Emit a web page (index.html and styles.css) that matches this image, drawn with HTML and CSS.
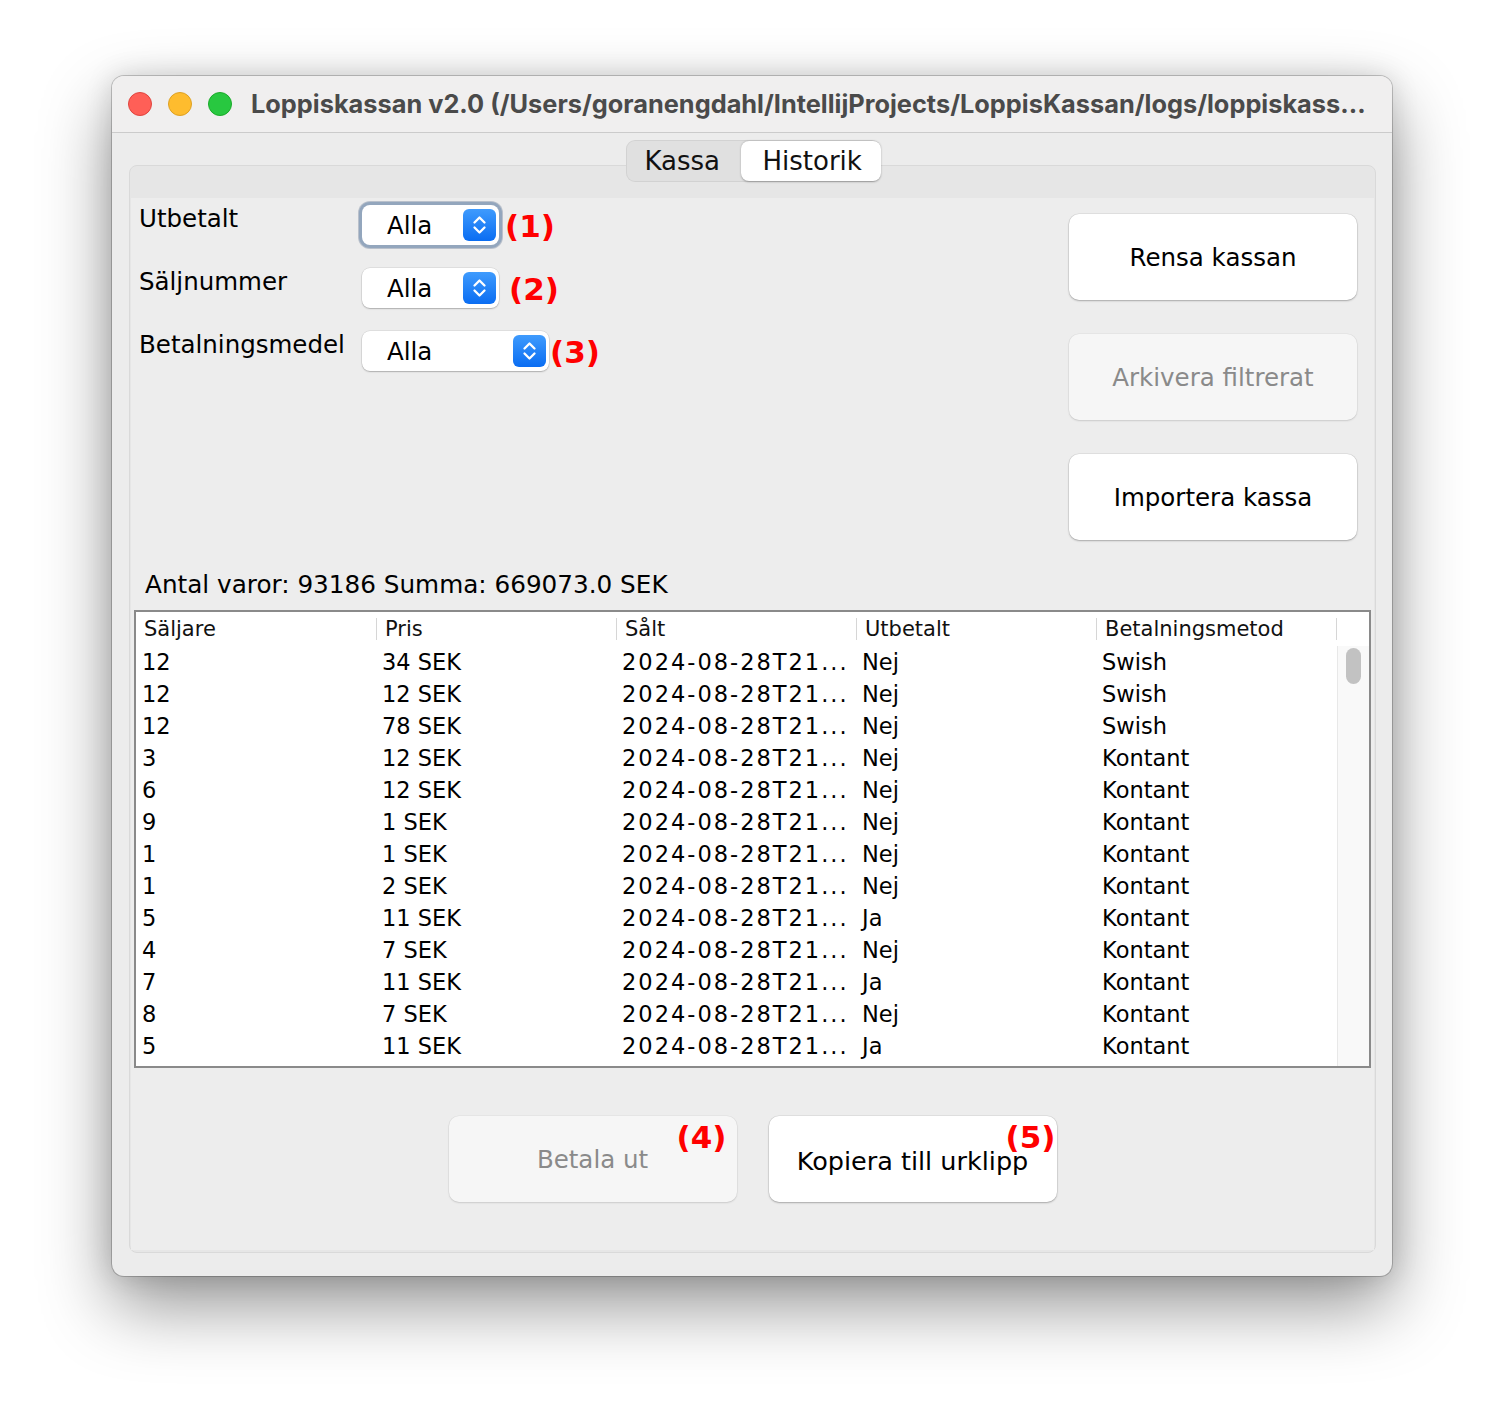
FILE: index.html
```html
<!DOCTYPE html>
<html lang="sv">
<head>
<meta charset="utf-8">
<title>Loppiskassan v2.0</title>
<link rel="stylesheet" href="styles.css">
</head>
<body>
<div class="window">
  <div class="titlebar">
    <span class="light red"></span>
    <span class="light yellow"></span>
    <span class="light green"></span>
    <div class="title">Loppiskassan v2.0 (/Users/goranengdahl/IntellijProjects/LoppisKassan/logs/loppiskass...</div>
  </div>
  <div class="content">
    <div class="tabs">
      <div class="tab">Kassa</div>
      <div class="tab active">Historik</div>
    </div>
    <div class="panel">
      <div class="pane">
        <div class="top">
          <div class="filters">
            <div class="frow">
              <div class="flabel">Utbetalt</div>
              <div class="combo focus"><span class="cval">Alla</span><span class="arrow"><svg width="33" height="32" viewBox="0 0 33 32"><path d="M11.5 13.5 L16.5 8.5 L21.5 13.5 M11.5 18.5 L16.5 23.5 L21.5 18.5" fill="none" stroke="#fff" stroke-width="2.3" stroke-linecap="round" stroke-linejoin="round"/></svg></span></div>
              <span class="mark m1">(1)</span>
            </div>
            <div class="frow">
              <div class="flabel">Säljnummer</div>
              <div class="combo"><span class="cval">Alla</span><span class="arrow"><svg width="33" height="32" viewBox="0 0 33 32"><path d="M11.5 13.5 L16.5 8.5 L21.5 13.5 M11.5 18.5 L16.5 23.5 L21.5 18.5" fill="none" stroke="#fff" stroke-width="2.3" stroke-linecap="round" stroke-linejoin="round"/></svg></span></div>
              <span class="mark m2">(2)</span>
            </div>
            <div class="frow">
              <div class="flabel">Betalningsmedel</div>
              <div class="combo wide"><span class="cval">Alla</span><span class="arrow"><svg width="33" height="32" viewBox="0 0 33 32"><path d="M11.5 13.5 L16.5 8.5 L21.5 13.5 M11.5 18.5 L16.5 23.5 L21.5 18.5" fill="none" stroke="#fff" stroke-width="2.3" stroke-linecap="round" stroke-linejoin="round"/></svg></span></div>
              <span class="mark m3">(3)</span>
            </div>
          </div>
          <div class="actions">
            <div class="btn">Rensa kassan</div>
            <div class="btn disabled">Arkivera filtrerat</div>
            <div class="btn">Importera kassa</div>
          </div>
        </div>
        <div class="summary">Antal varor: 93186 Summa: 669073.0 SEK</div>
        <div class="table">
          <div class="thead">
            <div class="th">Säljare</div>
            <div class="th">Pris</div>
            <div class="th">Sålt</div>
            <div class="th">Utbetalt</div>
            <div class="th">Betalningsmetod</div>
          </div>
          <div class="tbody">
            <div class="rows">
              <div class="tr"><div class="td">12</div><div class="td">34 SEK</div><div class="td date">2024-08-28T21...</div><div class="td">Nej</div><div class="td">Swish</div></div>
              <div class="tr"><div class="td">12</div><div class="td">12 SEK</div><div class="td date">2024-08-28T21...</div><div class="td">Nej</div><div class="td">Swish</div></div>
              <div class="tr"><div class="td">12</div><div class="td">78 SEK</div><div class="td date">2024-08-28T21...</div><div class="td">Nej</div><div class="td">Swish</div></div>
              <div class="tr"><div class="td">3</div><div class="td">12 SEK</div><div class="td date">2024-08-28T21...</div><div class="td">Nej</div><div class="td">Kontant</div></div>
              <div class="tr"><div class="td">6</div><div class="td">12 SEK</div><div class="td date">2024-08-28T21...</div><div class="td">Nej</div><div class="td">Kontant</div></div>
              <div class="tr"><div class="td">9</div><div class="td">1 SEK</div><div class="td date">2024-08-28T21...</div><div class="td">Nej</div><div class="td">Kontant</div></div>
              <div class="tr"><div class="td">1</div><div class="td">1 SEK</div><div class="td date">2024-08-28T21...</div><div class="td">Nej</div><div class="td">Kontant</div></div>
              <div class="tr"><div class="td">1</div><div class="td">2 SEK</div><div class="td date">2024-08-28T21...</div><div class="td">Nej</div><div class="td">Kontant</div></div>
              <div class="tr"><div class="td">5</div><div class="td">11 SEK</div><div class="td date">2024-08-28T21...</div><div class="td">Ja</div><div class="td">Kontant</div></div>
              <div class="tr"><div class="td">4</div><div class="td">7 SEK</div><div class="td date">2024-08-28T21...</div><div class="td">Nej</div><div class="td">Kontant</div></div>
              <div class="tr"><div class="td">7</div><div class="td">11 SEK</div><div class="td date">2024-08-28T21...</div><div class="td">Ja</div><div class="td">Kontant</div></div>
              <div class="tr"><div class="td">8</div><div class="td">7 SEK</div><div class="td date">2024-08-28T21...</div><div class="td">Nej</div><div class="td">Kontant</div></div>
              <div class="tr"><div class="td">5</div><div class="td">11 SEK</div><div class="td date">2024-08-28T21...</div><div class="td">Ja</div><div class="td">Kontant</div></div>
            </div>
            <div class="scrollbar"><div class="thumb"></div></div>
          </div>
        </div>
        <div class="bottom">
          <div class="btn disabled">Betala ut<span class="mark overlay m4">(4)</span></div>
          <div class="btn copy">Kopiera till urklipp<span class="mark overlay m5">(5)</span></div>
        </div>
      </div>
    </div>
  </div>
</div>
</body>
</html>
```

FILE: styles.css
```css
* { box-sizing: border-box; }

html { background: #ffffff; }

body {
  margin: 0;
  padding: 76px 0 148px 112px;
  background: #ffffff;
  font-family: "DejaVu Sans", "Liberation Sans", sans-serif;
  color: #000;
}

.window {
  width: 1280px;
  height: 1200px;
  border-radius: 12px;
  background: #ececec;
  overflow: hidden;
  display: flex;
  flex-direction: column;
  box-shadow: 0 0 0 1px rgba(0,0,0,0.2), 0 30px 70px rgba(0,0,0,0.42), 0 0 28px rgba(0,0,0,0.14);
}

.titlebar {
  height: 57px;
  flex: none;
  background: #f0efef;
  border-bottom: 1px solid #cbcbcb;
  display: flex;
  align-items: center;
  padding-left: 16px;
}

.light {
  width: 24px;
  height: 24px;
  border-radius: 50%;
  margin-right: 16px;
  flex: none;
}
.light.red { background: #ff5f57; border: 1px solid #e0443e; }
.light.yellow { background: #febc2e; border: 1px solid #dea123; }
.light.green { background: #28c840; border: 1px solid #1aab29; margin-right: 19px; }

.title {
  font-family: "Inter", "Liberation Sans", sans-serif;
  font-weight: 700;
  font-size: 25.35px;
  color: #4a4a4a;
  white-space: nowrap;
  overflow: hidden;
  margin-top: -1px;
}

.content {
  flex: 1;
  display: flex;
  flex-direction: column;
  padding: 7px 16px 23px 17px;
}

.tabs {
  align-self: center;
  position: relative;
  z-index: 1;
  display: flex;
  height: 42px;
  background: #e0e0e0;
  border-radius: 9px;
  box-shadow: inset 0 0 0 1px rgba(0,0,0,0.06);
  margin-left: 1px;
}

.tab {
  font-size: 26px;
  line-height: 42px;
  color: #111;
  padding: 0 24px 0 19px;
}
.tab:first-child { width: 115px; }
.tab.active {
  width: 140px;
  background: #fff;
  border-radius: 8px;
  margin: 1px 0;
  line-height: 40px;
  padding-left: 22px;
  box-shadow: 0 0.5px 2px rgba(0,0,0,0.3);
}

.panel {
  flex: 1;
  margin-top: -17px;
  border: 1px solid #d9d9d9;
  border-radius: 8px;
  background: #e6e6e6;
  padding: 32px 1px 2px 1px;
  display: flex;
  flex-direction: column;
}

.pane {
  flex: 1;
  background: #ededed;
  display: flex;
  flex-direction: column;
}

.top {
  height: 344px;
  display: flex;
  justify-content: space-between;
}

.filters {
  padding: 7px 0 0 8px;
  display: flex;
  flex-direction: column;
  gap: 22px;
}

.frow {
  display: flex;
  align-items: flex-start;
  height: 41px;
}

.flabel {
  width: 223px;
  font-size: 24.5px;
  line-height: 28px;
  margin-top: 0;
}

.combo {
  width: 137px;
  height: 40px;
  background: #fff;
  border-radius: 8px;
  box-shadow: 0 0 0 0.5px rgba(0,0,0,0.12), 0 1px 1.5px rgba(0,0,0,0.22);
  display: flex;
  align-items: center;
  justify-content: space-between;
  padding: 0 3px 0 25px;
  font-size: 24.5px;
}
.combo.wide { width: 187px; }
.combo.focus {
  box-shadow: 0 0 0 3px #93a6bd, 0 0 0 4px rgba(90,110,140,0.35);
}

.cval { line-height: 40px; margin-top: 1px; }

.arrow {
  width: 33px;
  height: 32px;
  border-radius: 6px;
  background: linear-gradient(#3f9bfd, #0a6df2);
  display: flex;
}

.mark {
  font-weight: 700;
  font-size: 31px;
  line-height: 34px;
  color: #ff0000;
  align-self: center;
}
.m1 { margin-left: 6px; }
.m2 { margin-left: 10px; }
.m3 { margin-left: 1px; }

.actions {
  padding: 16px 17px 0 0;
  display: flex;
  flex-direction: column;
  gap: 34px;
}

.btn {
  width: 288px;
  height: 86px;
  border-radius: 10px;
  background: #fff;
  box-shadow: 0 0 0 0.5px rgba(0,0,0,0.1), 0 1px 2px rgba(0,0,0,0.25);
  display: flex;
  align-items: center;
  justify-content: center;
  font-size: 24.5px;
  color: #000;
  position: relative;
}
.btn.disabled {
  background: #f6f6f6;
  color: #8a8a8a;
  box-shadow: 0 0 0 0.5px rgba(0,0,0,0.06), 0 1px 2px rgba(0,0,0,0.12);
}
.btn.copy { font-size: 25.5px; padding-top: 3px; }

.summary {
  margin-top: 28px;
  padding-left: 14px;
  font-size: 24.7px;
  line-height: 30px;
}

.table {
  margin: 10px 3px 0 3px;
  height: 458px;
  border: 2px solid #8a8a8a;
  background: #fff;
  display: flex;
  flex-direction: column;
}

.thead {
  height: 34px;
  flex: none;
  display: flex;
}

.th {
  width: 240px;
  font-size: 21px;
  line-height: 34px;
  padding-left: 8px;
  color: #111;
  background: linear-gradient(#d6d6d6, #d6d6d6) right 6px / 1px 22px no-repeat;
}
.th:first-child { width: 241px; }

.tbody {
  flex: 1;
  display: flex;
  overflow: hidden;
}

.rows {
  width: 1201px;
  overflow: hidden;
}

.tr {
  display: flex;
  height: 32px;
}

.td {
  width: 240px;
  padding-left: 5px;
  font-size: 22.5px;
  line-height: 32px;
  white-space: nowrap;
}
.td:first-child { width: 241px; padding-left: 6px; }
.td.date { letter-spacing: 2px; }

.scrollbar {
  flex: 1;
  background: #f9f9f9;
  border-left: 1px solid #e8e8e8;
  padding: 2px 0 0 8px;
}

.thumb {
  width: 15px;
  height: 36px;
  border-radius: 8px;
  background: #c2c2c2;
}

.bottom {
  margin-top: 48px;
  display: flex;
  justify-content: center;
  gap: 32px;
}

.overlay {
  position: absolute;
  top: 4px;
  font-size: 31px;
}
.m4 { left: 228px; }
.m5 { left: 237px; }
```
